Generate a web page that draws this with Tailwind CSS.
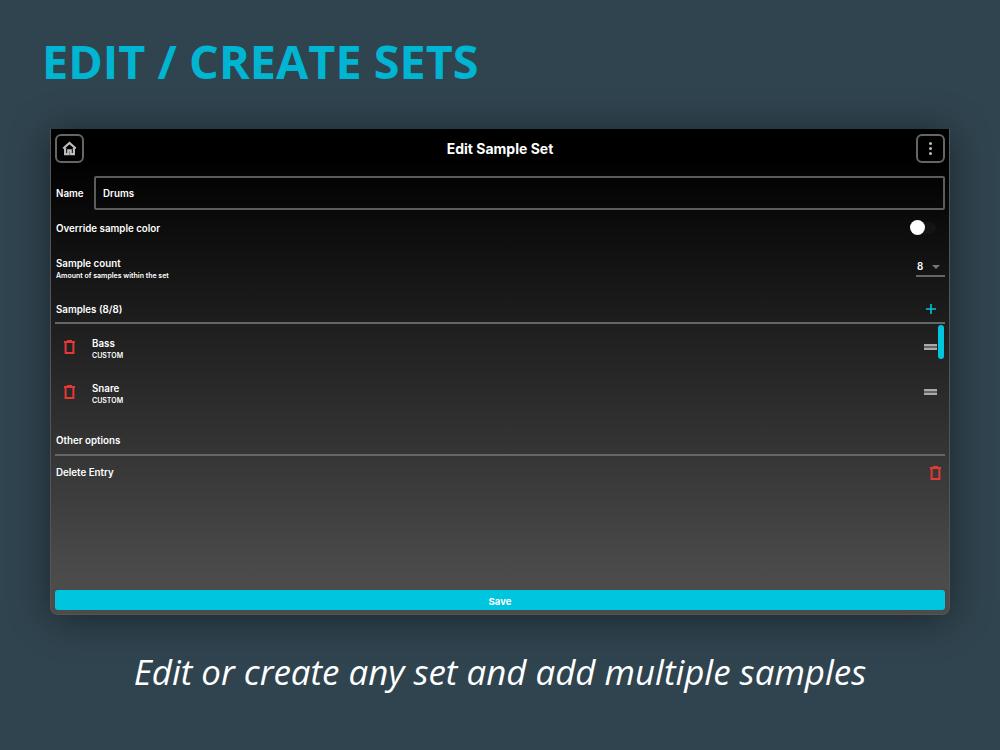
<!DOCTYPE html>
<html lang="en">
  <head>
    <meta charset="UTF-8" />
    <title>Edit / Create Sets</title>
    <script src="https://cdn.jsdelivr.net/npm/@tailwindcss/browser@4"></script>
  </head>
  <body class="w-[1000px] h-[750px] overflow-hidden bg-[#30444f] font-['Open_Sans',sans-serif]">
    <h1 class="h-[129px] pl-[42px] pt-[30px] text-[46.8px] leading-[62px] font-bold text-[#00b5d1]">EDIT / CREATE SETS</h1>

    <!-- app window -->
    <main class="relative mx-[50px] w-[900px] h-[486px] flex flex-col px-[4px] pb-[4px] rounded-b-[8px] border-x border-b border-[#555] bg-[linear-gradient(180deg,#000_6%,#4b4b4b_92%)] shadow-[0_4px_40px_rgba(0,0,0,0.45)] text-white font-['Inter',sans-serif] font-semibold text-[9.75px] leading-[12px]">
      <!-- header -->
      <header class="flex items-center justify-between h-[29px] mt-[5px]">
        <button class="w-[29px] h-[29px] flex items-center justify-center rounded-[6px] border-2 border-[#666]">
          <svg class="w-[15px] h-[15px]" viewBox="0 0 24 24" fill="none" stroke="#bdbdbd" stroke-width="3.5">
            <path d="M2 12 12 3l10 9" />
            <path d="M5 11v10h5v-6h4v6h5V11" />
          </svg>
        </button>
        <span class="text-[14px] font-bold">Edit Sample Set</span>
        <button class="w-[29px] h-[29px] flex flex-col items-center justify-center gap-[2px] rounded-[6px] border-2 border-[#666]">
          <span class="w-[3px] h-[3px] rounded-full bg-[#bdbdbd]"></span>
          <span class="w-[3px] h-[3px] rounded-full bg-[#bdbdbd]"></span>
          <span class="w-[3px] h-[3px] rounded-full bg-[#bdbdbd]"></span>
        </button>
      </header>

      <!-- name -->
      <div class="flex items-center mt-[13px]">
        <span class="w-[39px] pl-[1px] pt-[2px]">Name</span>
        <div class="flex-1 h-[34px] flex items-center pl-[7px] pt-[2px] rounded-[2px] border-2 border-[#5c5c5c]">Drums</div>
      </div>

      <!-- override colour -->
      <div class="flex items-center justify-between mt-[9px] h-[18px]">
        <span class="pl-[1px] pt-[2px]">Override sample color</span>
        <div class="relative w-[26px] h-[12px] mr-[9px] mt-[-1px] rounded-full bg-[#141414]">
          <span class="absolute left-0 top-[-1.5px] w-[15px] h-[15px] rounded-full bg-white"></span>
        </div>
      </div>

      <!-- sample count -->
      <div class="flex items-start justify-between mt-[21px] h-[23px]">
        <div class="pl-[1px]">
          <p>Sample count</p>
          <p class="text-[7px] leading-[12px]">Amount of samples within the set</p>
        </div>
        <div class="w-[29px] h-[21px] mt-[-2px] pl-[1px] pt-[2px] flex items-center gap-[9px] border-b-2 border-[#666]">
          <span>8</span>
          <span class="w-0 h-0 border-x-[4px] border-t-[4px] border-x-transparent border-t-[#777]"></span>
        </div>
      </div>

      <!-- samples -->
      <div class="flex items-center justify-between mt-[18px] h-[19px]">
        <span class="pl-[1px] pt-[2px]">Samples (8/8)</span>
        <svg class="w-[12px] h-[12px] mr-[8px]" viewBox="0 0 12 12" stroke="#00c5de" stroke-width="1.6">
          <path d="M6 1v10M1 6h10" />
        </svg>
      </div>
      <div class="h-[2px] mt-[4px] bg-[#666]"></div>

      <div class="flex items-center justify-between h-[45px] pl-[9px] pr-[8px]">
        <div class="flex items-center gap-[17px]">
          <svg class="w-[11px] h-[14px]" viewBox="0 0 11 14" fill="none" stroke="#e53935" stroke-width="2">
            <path d="M0 2h11M3 1h5" />
            <path d="M1.6 3v10h7.8V3" />
          </svg>
          <div class="pt-[7px]">
            <p>Bass</p>
            <p class="text-[7px] leading-[12px]">CUSTOM</p>
          </div>
        </div>
        <div class="w-[13px] h-[6px] border-y-2 border-[#aaa] bg-[#666]"></div>
      </div>
      <div class="flex items-center justify-between h-[45px] pl-[9px] pr-[8px]">
        <div class="flex items-center gap-[17px]">
          <svg class="w-[11px] h-[14px]" viewBox="0 0 11 14" fill="none" stroke="#e53935" stroke-width="2">
            <path d="M0 2h11M3 1h5" />
            <path d="M1.6 3v10h7.8V3" />
          </svg>
          <div class="pt-[7px]">
            <p>Snare</p>
            <p class="text-[7px] leading-[12px]">CUSTOM</p>
          </div>
        </div>
        <div class="w-[13px] h-[6px] border-y-2 border-[#aaa] bg-[#666]"></div>
      </div>

      <!-- other options -->
      <p class="mt-[21px] pl-[1px]">Other options</p>
      <div class="h-[2px] mt-[7px] bg-[#666]"></div>
      <div class="flex items-center justify-between h-[33px] pr-[4px]">
        <span class="pl-[1px]">Delete Entry</span>
        <svg class="w-[11px] h-[14px]" viewBox="0 0 11 14" fill="none" stroke="#e53935" stroke-width="2">
          <path d="M0 2h11M3 1h5" />
          <path d="M1.6 3v10h7.8V3" />
        </svg>
      </div>

      <button class="mt-auto h-[20px] pt-[3px] rounded-[3px] bg-[#00c5de] font-bold text-[9.5px]">Save</button>

      <!-- scrollbar thumb -->
      <div class="absolute right-[5px] top-[196px] w-[6px] h-[34px] rounded-full bg-[#00c5de]"></div>
    </main>

    <p class="mt-[32px] text-center text-[34.9px] leading-[50px] italic text-white">Edit or create any set and add multiple samples</p>
  </body>
</html>
